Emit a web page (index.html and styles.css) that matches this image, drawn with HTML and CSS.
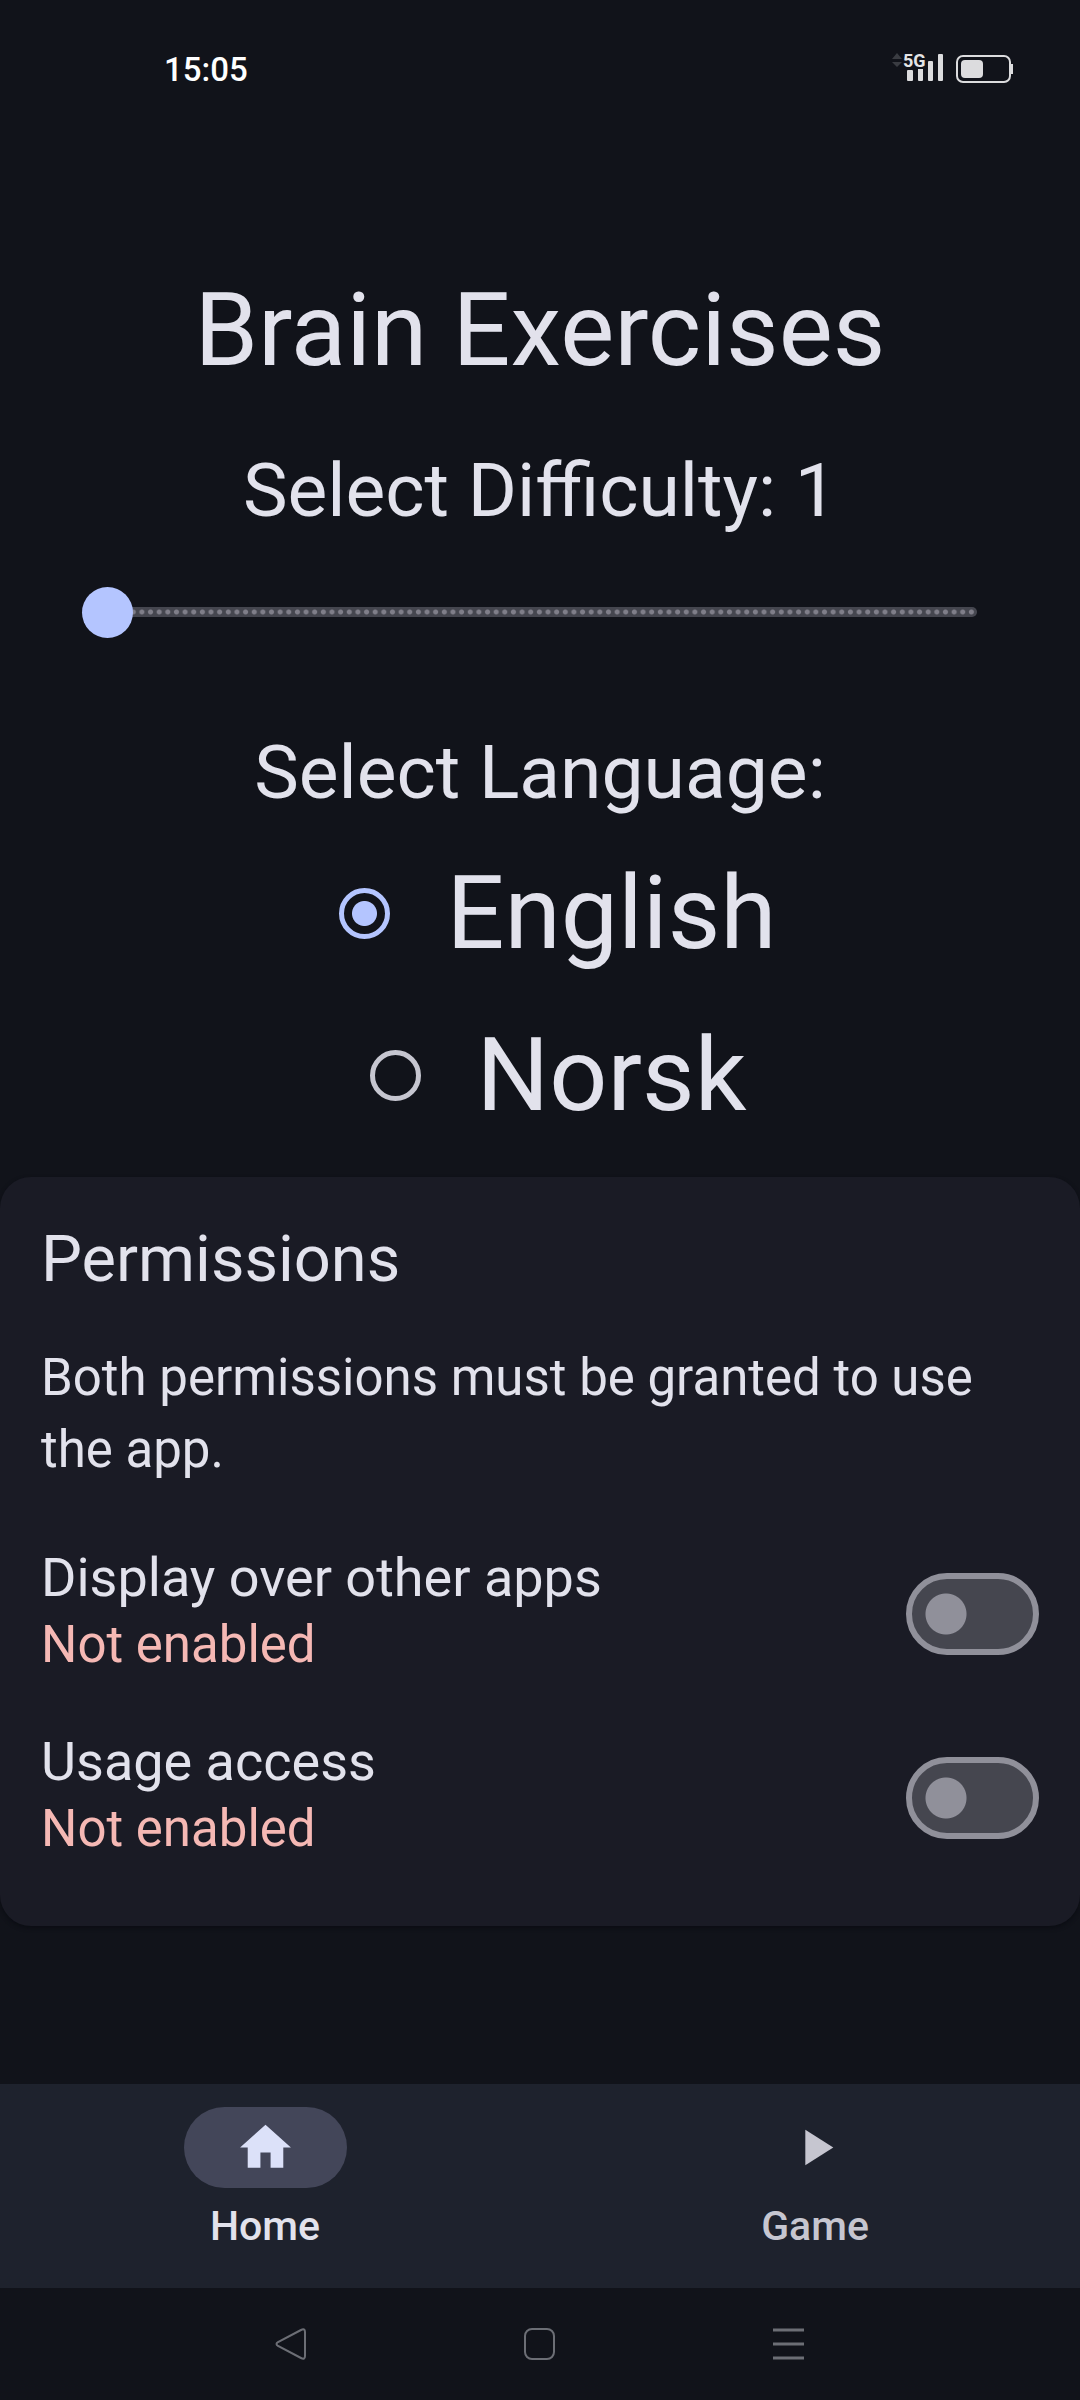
FILE: index.html
```html
<!DOCTYPE html>
<html lang="en">
<head>
<meta charset="utf-8">
<meta name="viewport" content="width=device-width, initial-scale=1">
<title>Brain Exercises</title>
<link rel="stylesheet" href="styles.css">
</head>
<body>
<header class="status-bar">
  <time class="clock">15:05</time>
  <div class="status-icons">
    <svg width="52" height="44" viewBox="0 -7 52 44" role="img" aria-label="5G signal">
      <path class="signal-idle" d="M0 5l5-6 5 6zM0 8h10l-5 5z"/>
      <text class="signal-text" x="11" y="13">5G</text>
      <path class="signal-bars" d="M15 17q0-1 1-1h4q1 0 1 1v9q0 1-1 1h-4q-1 0-1-1zM26 15h5v11q0 1-1 1h-3q-1 0-1-1zM36 8q0-1 1-1h3q1 0 1 1v18q0 1-1 1h-3q-1 0-1-1zM46 1q0-1 1-1h3q1 0 1 1v25q0 1-1 1h-3q-1 0-1-1z"/>
    </svg>
    <svg width="58" height="44" viewBox="0 -7 58 44" role="img" aria-label="Battery">
      <rect class="battery-case" x="1" y="2" width="53" height="26" rx="6"/>
      <rect class="battery-fill" x="5" y="6" width="22" height="18" rx="4"/>
      <path class="battery-fill" d="M55 10h2v10h-2z"/>
    </svg>
  </div>
</header>

<main class="content">
  <h1 class="title">Brain Exercises</h1>
  <label class="heading" for="difficulty">Select Difficulty: 1</label>
  <div class="slider">
    <div class="slider-track"></div>
    <input class="slider-input" id="difficulty" type="range" min="1" max="101" value="1">
  </div>
  <fieldset class="languages">
    <legend class="heading">Select Language:</legend>
    <label class="language"><input class="radio" type="radio" name="language" checked>English</label>
    <label class="language"><input class="radio" type="radio" name="language">Norsk</label>
  </fieldset>

  <section class="card">
    <h2 class="card-title">Permissions</h2>
    <p class="card-text">Both permissions must be granted to use the app.</p>
    <div class="permission">
      <label class="permission-label" for="overlay">
        <span class="permission-name">Display over other apps</span>
        <span class="permission-state">Not enabled</span>
      </label>
      <input class="switch" id="overlay" type="checkbox" role="switch">
    </div>
    <div class="permission">
      <label class="permission-label" for="usage">
        <span class="permission-name">Usage access</span>
        <span class="permission-state">Not enabled</span>
      </label>
      <input class="switch" id="usage" type="checkbox" role="switch">
    </div>
  </section>
</main>

<nav class="tabs">
  <a class="tab tab-active" href="#home" aria-current="page">
    <span class="tab-icon"><svg width="61" height="61" viewBox="0 0 24 24"><path d="M10 20v-6h4v6h5v-8h3L12 3 2 12h3v8z"/></svg></span>
    Home
  </a>
  <a class="tab" href="#game">
    <span class="tab-icon"><svg width="61" height="61" viewBox="0 0 24 24"><path d="M8 5v14l11-7z"/></svg></span>
    Game
  </a>
</nav>

<footer class="system-bar">
  <button class="system-button" type="button" aria-label="Back">
    <svg width="32" height="36" viewBox="0 0 32 36"><path d="M26 4Q30 2 30 6V30Q30 34 26 32L3 20Q0 18 3 16Z"/></svg>
  </button>
  <button class="system-button" type="button" aria-label="Home screen">
    <svg width="32" height="36" viewBox="0 0 32 36"><rect x="1" y="3" width="29" height="30" rx="7"/></svg>
  </button>
  <button class="system-button" type="button" aria-label="Recent apps">
    <svg width="32" height="36" viewBox="0 0 32 36"><path class="menu-lines" d="M0 4h31M0 18h31M0 32h31"/></svg>
  </button>
</footer>
</body>
</html>
```
FILE: styles.css
```css
* {
  box-sizing: border-box;
}

body {
  margin: 0;
  min-height: 100vh;
  display: flex;
  flex-direction: column;
  background: #11131a;
  color: #e2e2ec;
  font-family: Roboto, sans-serif;
}

svg {
  display: block;
}

.status-bar {
  display: flex;
  justify-content: space-between;
  align-items: center;
  height: 138px;
  padding: 0 66px 0 164px;
}

.clock {
  color: #fff;
  font-size: 33px;
  font-weight: 500;
}

.status-icons {
  display: flex;
  gap: 12px;
}

.signal-idle {
  fill: #3a3c42;
}

.signal-text {
  fill: #e4e4e6;
  font-size: 18px;
  font-weight: 700;
}

.signal-bars,
.battery-fill {
  fill: #dcdcde;
}

.battery-case {
  fill: none;
  stroke: #dcdcde;
  stroke-width: 2;
}

.content {
  flex: 1;
  display: flex;
  flex-direction: column;
}

.title {
  margin: 122px 0 0;
  font-size: 102px;
  font-weight: 400;
  line-height: 140px;
  text-align: center;
}

.heading {
  width: 100%;
  margin-top: 40px;
  padding: 0;
  font-size: 75px;
  line-height: 100px;
  text-align: center;
}

.slider {
  display: grid;
  align-items: center;
  margin: 22px 82px 0;
  height: 100px;
}

.slider-track {
  grid-area: 1 / 1;
  height: 10px;
  margin: 0 21px;
  border-radius: 5px;
  background: radial-gradient(circle, #7f7e89 2px, #45464f 3px) 0 0 / calc(100% / 101) 100%;
}

.slider-input {
  grid-area: 1 / 1;
  width: 100%;
  height: 52px;
  margin: 0;
  appearance: none;
  background: none;
}

.slider-input::-webkit-slider-thumb {
  appearance: none;
  width: 51px;
  height: 51px;
  border-radius: 50%;
  background: #b4c5ff;
}

.languages {
  display: flex;
  flex-direction: column;
  align-items: center;
  margin: 60px 0 21px;
  padding: 10px 0 0;
  border: 0;
}

.languages .heading {
  margin-top: 0;
}

.language {
  display: flex;
  align-items: center;
  gap: 56px;
  height: 162px;
  padding-left: 36px;
  font-size: 102px;
  line-height: 140px;
}

.radio {
  appearance: none;
  width: 51px;
  height: 51px;
  margin: 0;
  border: 5px solid #c6c6d0;
  border-radius: 50%;
}

.radio:checked {
  border-color: #b4c5ff;
  background: radial-gradient(circle, #b4c5ff 12px, transparent 13px);
}

.card {
  padding: 41px 41px 36px;
  border-radius: 31px;
  background: #1a1b25;
  box-shadow: 0 2px 4px #0b0d13;
}

.card-title {
  margin: 0;
  font-size: 65px;
  font-weight: 400;
  line-height: 82px;
}

.card-text {
  margin: 42px 0 36px;
  font-size: 51px;
  line-height: 72px;
}

.permission {
  display: flex;
  justify-content: space-between;
  align-items: center;
  height: 184px;
}

.permission-label {
  display: flex;
  flex-direction: column;
  padding-bottom: 6px;
  line-height: 67px;
}

.permission-name {
  font-size: 54px;
}

.permission-state {
  color: #f5b8b4;
  font-size: 51px;
}

.switch {
  appearance: none;
  width: 133px;
  height: 82px;
  margin: 0;
  border: 6px solid #90909a;
  border-radius: 41px;
  background: radial-gradient(circle at 34px 50%, #90909a 20px, #45464f 21px);
}

.tabs {
  display: grid;
  grid-template-columns: 1fr 1fr;
  gap: 20px;
  padding: 23px 0 35px;
  background: #1e222d;
}

.tab {
  display: flex;
  flex-direction: column;
  align-items: center;
  gap: 12px;
  color: #c6c6d0;
  font-size: 41px;
  font-weight: 500;
  line-height: 53px;
  text-decoration: none;
}

.tab-active {
  color: #e2e2ec;
}

.tab-icon {
  display: grid;
  place-items: center;
  width: 163px;
  height: 81px;
  border-radius: 41px;
  fill: #c6c6d0;
}

.tab-active .tab-icon {
  background: #434659;
  fill: #dce1f9;
}

.system-bar {
  display: flex;
  justify-content: center;
  align-items: center;
  gap: 217px;
  height: 112px;
}

.system-button {
  padding: 0;
  border: 0;
  background: none;
  fill: none;
  stroke: #6c6e75;
  stroke-width: 2;
}

.menu-lines {
  stroke-width: 3;
}
```
